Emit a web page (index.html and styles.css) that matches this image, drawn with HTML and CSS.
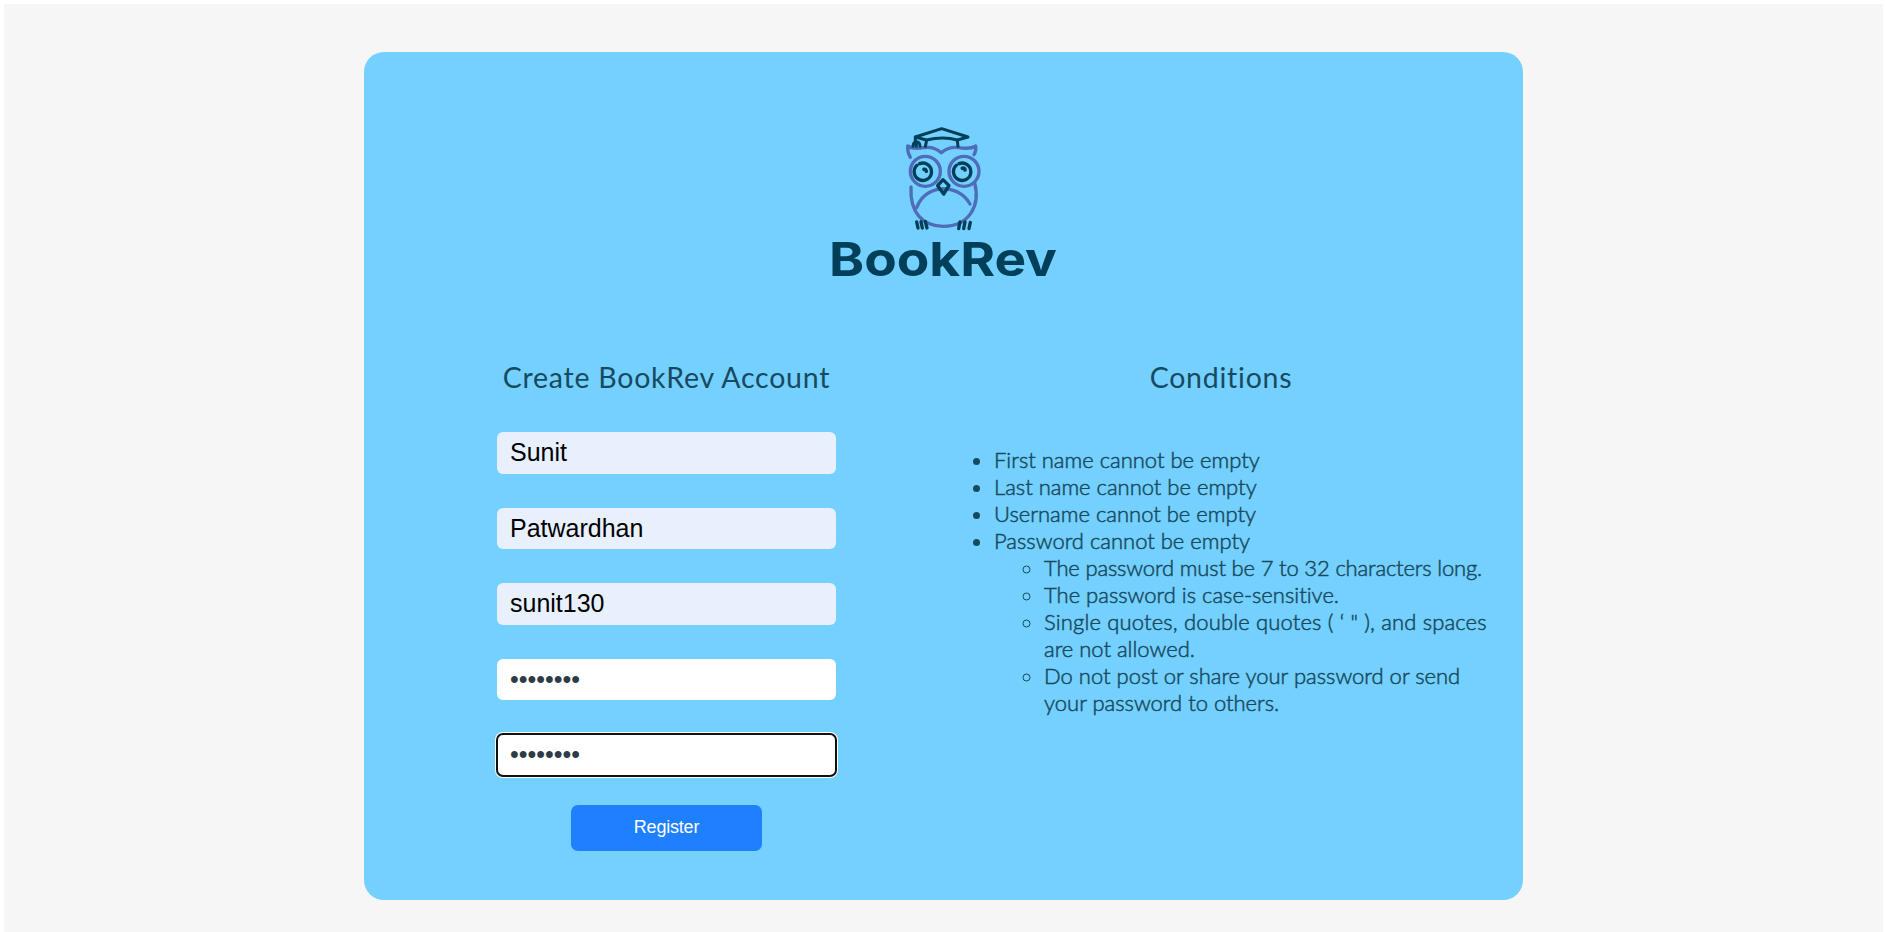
FILE: index.html
```html
<!DOCTYPE html>
<html lang="en">
<head>
<meta charset="utf-8">
<title>BookRev</title>
<link rel="stylesheet" href="styles.css">
</head>
<body>
<main class="page">
  <section class="card">
    <svg class="logo" viewBox="0 0 250 175" role="img" aria-label="BookRev">
      <g transform="translate(60 0) scale(.33333)" fill="none" stroke-linecap="round" stroke-linejoin="round">
        <g stroke="#4f6cb8" stroke-width="10">
          <path d="M91 127Q82 112 83 93Q98 103 131 98C156 94 170 101 184 113C198 101 213 95 236 98Q272 103 287 93Q289 109 282 119"/>
          <circle cx="136" cy="169" r="45"/>
          <circle cx="252" cy="169" r="45"/>
          <path d="M93 216C89 292 127 334 190 334C266 334 302 274 284 204"/>
          <path d="M110 278C135 207 232 202 270 267"/>
        </g>
        <g stroke="#02405a" stroke-width="10">
          <path d="M106 66L185 41L264 66L232 75Q190 63 139 75Z" stroke-width="9"/>
          <path d="M140 76L136 94M232 76L234 94M106 66V80M99 94Q100 80 109 80Q120 81 120 94M109 84V94" stroke-width="9"/>
          <path d="M111 151A26 26 0 1 0 119 146M229 151A26 26 0 1 0 237 146"/>
          <path d="M132 163Q137 162 139 169M247 160Q254 158 255 165" stroke-width="11"/>
          <path d="M189 194L207 212L191 237L173 212Z"/>
          <path d="M110 321L114 339M123 320L127 339M136 320L141 339M240 321L236 341M255 321L251 341M271 322L267 341"/>
        </g>
      </g>
      <text class="wordmark" x="9" y="161" textLength="228" lengthAdjust="spacingAndGlyphs">BookRev</text>
    </svg>
    <div class="columns">
      <form class="form">
        <h1 class="title">Create BookRev Account</h1>
        <input class="field filled" type="text" value="Sunit" aria-label="First name">
        <input class="field filled" type="text" value="Patwardhan" aria-label="Last name">
        <input class="field filled" type="text" value="sunit130" aria-label="Username">
        <input class="field" type="password" value="password" aria-label="Password">
        <input class="field current" type="password" value="password" aria-label="Confirm password">
        <button class="register" type="button">Register</button>
      </form>
      <div class="conditions">
        <h2 class="title">Conditions</h2>
        <ul class="rules">
          <li>First name cannot be empty</li>
          <li>Last name cannot be empty</li>
          <li>Username cannot be empty</li>
          <li>Password cannot be empty
            <ul class="subrules">
              <li class="tight">The password must be 7 to 32 characters long.</li>
              <li>The password is case-sensitive.</li>
              <li><span class="loose">Single quotes, double quotes ( ‘ " ), and spaces</span><br>are not allowed.</li>
              <li>Do not post or share your password or send<br>your password to others.</li>
            </ul>
          </li>
        </ul>
      </div>
    </div>
  </section>
</main>
</body>
</html>
```
FILE: styles.css
```css
* { box-sizing: border-box; }
body { margin: 0; background: #fff; }
.page {
  height: 928px;
  margin: 4px 3px 0 4px;
  padding: 48px 0 0 360px;
  background: #f6f6f6;
}
.card {
  width: 1159px;
  height: 848px;
  padding-top: 63px;
  border-radius: 20px;
  background: #74d0ff;
  color: #174a5f;
  font-family: Candara, Lato, sans-serif;
}
.logo { display: block; width: 250px; height: 175px; margin-left: 456px; }
.wordmark { font: 700 47px Inter, sans-serif; fill: #02405a; }
.columns { display: flex; padding: 66px 0 0 133px; }
.form { display: flex; flex-direction: column; align-items: center; width: 339px; }
.title {
  margin: 0;
  height: 76px;
  font-size: 28.5px;
  line-height: 42px;
  font-weight: 400;
  letter-spacing: .75px;
  text-align: center;
  white-space: nowrap;
}
.field {
  width: 339px;
  height: 41.5px;
  margin: 0 0 34px;
  padding: 0 13px;
  border: 0;
  border-radius: 6px;
  background: #fff;
  color: #2f3b45;
  font: 25px "Liberation Sans", Arial, sans-serif;
}
.filled { background: #e8f0fe; color: #000; }
.current { margin-bottom: 29px; outline: 2px solid #101010; outline-offset: -1px; box-shadow: 0 0 0 2px #fff; }
.register {
  width: 191px;
  height: 46px;
  padding: 0 0 1px;
  border: 0;
  border-radius: 7px;
  background: #1e7fff;
  color: #fff;
  font: 18px "Liberation Sans", Arial, sans-serif;
  letter-spacing: -.2px;
}
.conditions { width: 534px; margin-left: 118px; }
.rules {
  margin: 14px 0 0;
  padding-left: 40px;
  font-size: 22px;
  line-height: 27px;
  font-weight: 300;
  font-variant-ligatures: none;
  -webkit-text-stroke: .5px #174a5f;
  white-space: nowrap;
}
.subrules { padding-left: 50px; }
.tight { letter-spacing: -.16px; }
.loose { letter-spacing: .16px; }
```
